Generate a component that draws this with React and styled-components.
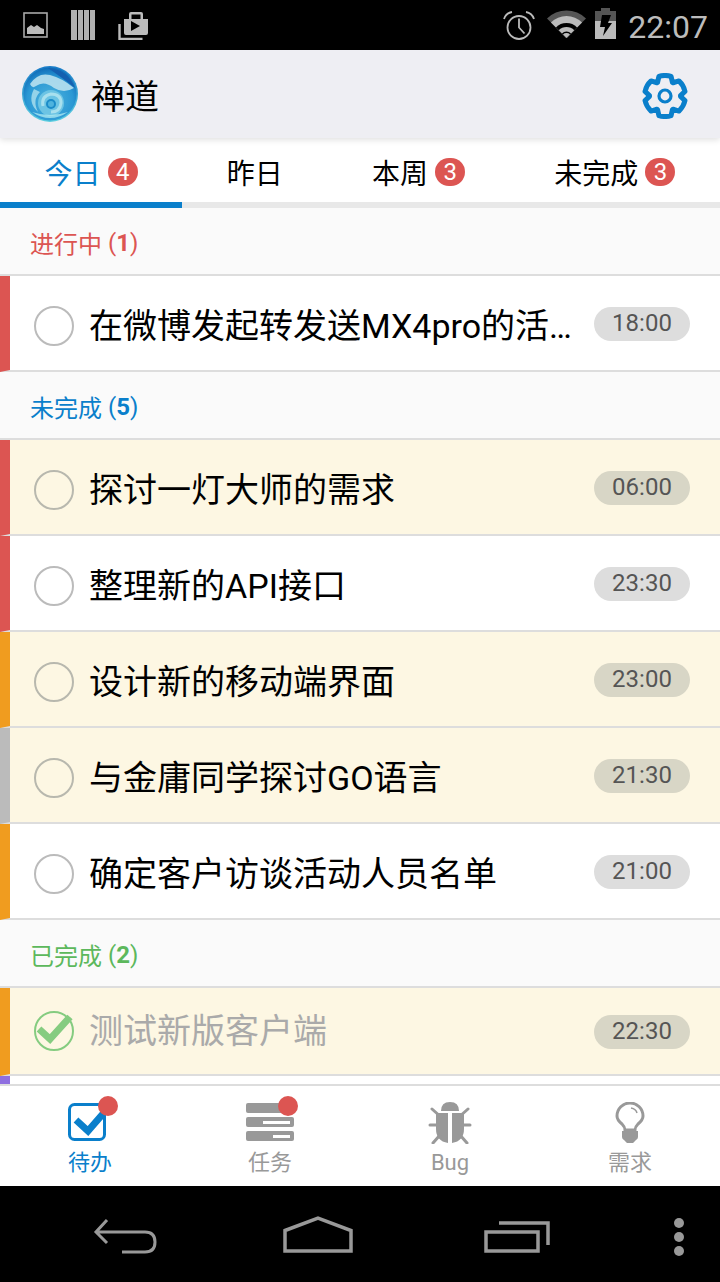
import styled, { createGlobalStyle } from 'styled-components';

const BLUE = '#0a7fcb';
const RED = '#dc5552';
const ORANGE = '#f09c1f';
const GREY = '#bbbbbb';
const PURPLE = '#8f6fe0';
const GREEN = '#5cb85c';

const GlobalStyle = createGlobalStyle`
  html, body { margin: 0; padding: 0; background: #000; }
  body { font-family: Roboto, "Noto Sans CJK SC", sans-serif; }
  * { box-sizing: border-box; }
`;

const Phone = styled.div`
  width: 720px;
  height: 1282px;
  display: flex;
  flex-direction: column;
  overflow: hidden;
  background: #fff;
`;

/* status bar */
const StatusBar = styled.div`
  height: 50px;
  flex: none;
  background: #000;
  display: flex;
  align-items: center;
  justify-content: space-between;
  padding: 0 12px 0 23px;
`;
const StatusGroup = styled.div`
  display: flex;
  align-items: center;
  gap: ${(p) => p.$gap}px;
`;
const Clock = styled.span`
  font-size: 32px;
  line-height: 50px;
  padding-top: 3px;
  color: #bcbcbc;
  margin-left: 3px;
`;

/* header */
const Header = styled.header`
  height: 88px;
  flex: none;
  background: #eeeef3;
  display: flex;
  align-items: center;
  padding: 0 32px 0 22px;
  box-shadow: 0 2px 6px rgba(0, 0, 0, 0.12);
  position: relative;
  z-index: 1;
`;
const AppName = styled.h1`
  flex: 1;
  margin: 0 0 0 13px;
  padding-top: 6px;
  font-size: 34px;
  line-height: 44px;
  font-weight: 400;
  color: #000;
`;
const GearWrap = styled.svg`
  width: 46px;
  height: 46px;
  flex: none;
  margin-top: 4px;
`;

/* tabs */
const Tabs = styled.nav`
  height: 70px;
  flex: none;
  display: flex;
  background: #fff;
  border-bottom: 6px solid #e8e8e8;
`;
const Tab = styled.div`
  flex: 1 1 auto;
  height: 70px;
  display: flex;
  align-items: center;
  justify-content: center;
  gap: 7px;
  padding-top: 4px;
  font-size: 28px;
  color: ${(p) => (p.$active ? BLUE : '#000')};
  border-bottom: 6px solid ${(p) => (p.$active ? BLUE : 'transparent')};
`;
const Count = styled.span`
  width: 30px;
  height: 28px;
  border-radius: 14px;
  background: ${RED};
  color: #fff;
  font-size: 24px;
  line-height: 28px;
  text-align: center;
`;

/* list */
const List = styled.main`
  flex: 1;
  min-height: 0;
  overflow: hidden;
  background: #fafafa;
`;
const SectionTitle = styled.div`
  height: 68px;
  padding: 3px 0 0 30px;
  display: flex;
  align-items: center;
  gap: 6px;
  font-size: 24px;
  color: ${(p) => p.$color};
  border-bottom: 2px solid #dddddd;
`;
const SectionCount = styled.b`
  font-weight: 700;
`;
const Row = styled.div`
  height: ${(p) => (p.$done ? 88 : 96)}px;
  display: flex;
  align-items: center;
  padding: 0 30px 0 24px;
  background: ${(p) => (p.$warm ? '#fdf7e3' : '#fff')};
  border-left: 10px solid ${(p) => p.$stripe};
  border-bottom: 2px solid #dddddd;
`;
const Circle = styled.span`
  width: 40px;
  height: 40px;
  flex: none;
  margin-top: 6px;
  border-radius: 50%;
  border: 2px solid ${(p) => (p.$warm ? '#b8b8ae' : GREY)};
`;
const DoneMark = styled.svg`
  width: 40px;
  height: 40px;
  flex: none;
`;
const RowTitle = styled.div`
  flex: 1;
  min-width: 0;
  margin: ${(p) => (p.$done ? 0 : 6)}px 17px 0 15px;
  font-size: 34px;
  line-height: 44px;
  color: ${(p) => (p.$done ? '#aaaaaa' : '#000')};
  white-space: nowrap;
  overflow: hidden;
  text-overflow: ellipsis;
`;
const Time = styled.span`
  width: 96px;
  height: 34px;
  flex: none;
  margin-top: 2px;
  border-radius: 17px;
  background: ${(p) => (p.$warm ? '#d8d6c6' : '#dddddd')};
  color: #555;
  font-size: 24px;
  line-height: 32px;
  text-align: center;
`;

/* bottom tab bar */
const BottomBar = styled.nav`
  height: 102px;
  flex: none;
  display: grid;
  grid-template-columns: repeat(4, 1fr);
  background: #fff;
  border-top: 2px solid #dddddd;
`;
const BottomItem = styled.div`
  display: flex;
  flex-direction: column;
  align-items: center;
  padding-top: 16px;
  color: ${(p) => (p.$active ? BLUE : '#999999')};
  font-size: 22px;
`;
const BottomIcon = styled.div`
  position: relative;
  width: 48px;
  height: 42px;
  display: flex;
  align-items: flex-start;
  justify-content: center;
`;
const Dot = styled.span`
  position: absolute;
  top: -6px;
  right: -4px;
  width: 20px;
  height: 20px;
  border-radius: 50%;
  background: ${RED};
`;
const BottomLabel = styled.span`
  line-height: 30px;
  margin-top: 4px;
`;

/* android nav */
const NavBar = styled.div`
  height: 96px;
  flex: none;
  background: #000;
  display: flex;
  align-items: flex-start;
  padding: 31px 0 0 93px;
`;
const NavIcon = styled.svg`
  flex: none;
  margin-left: ${(p) => p.$left || 0}px;
  margin-top: ${(p) => p.$top || 0}px;
`;

const gearPath = (() => {
  const pts = [];
  for (let i = 0; i < 6; i++) {
    const a = ((i * 60 - 90) * Math.PI) / 180;
    const w = 0.3;
    const xy = (r, t) => `${(23 + r * Math.cos(t)).toFixed(2)} ${(23 + r * Math.sin(t)).toFixed(2)}`;
    pts.push(`${i ? 'L' : 'M'}${xy(15.5, a - 0.5)}`);
    pts.push(`L${xy(20.5, a - w)}`);
    pts.push(`Q${xy(21.5, a)} ${xy(20.5, a + w)}`);
    pts.push(`L${xy(15.5, a + 0.5)}`);
  }
  return pts.join(' ') + ' Z';
})();

// one wedge of the wifi fan, radius r around the tip
const fan = (r) => {
  const d = r * 0.707;
  return `M19.5 29L${19.5 - d} ${29 - d}A${r} ${r} 0 0 1 ${19.5 + d} ${29 - d}Z`;
};

const PictureIcon = () => (
  <svg width="25" height="26" viewBox="0 0 25 26">
    <rect x="1" y="1" width="23" height="24" fill="none" stroke="#a8a8a8" strokeWidth="1.6" />
    <path d="M4 22v-6l4-3 3 2 3-2 4 3 3 1v5z" fill="#bbb" />
  </svg>
);
const BooksIcon = () => (
  <svg width="24" height="30" viewBox="0 0 24 30">
    <path d="M0 0h6v30H0zM7 0h5v30H7zM13 0h5v30h-5zM19 0h5v30h-5z" fill="#b0b0b0" />
  </svg>
);
const BriefcaseIcon = () => (
  <svg width="30" height="30" viewBox="0 -1 30 30">
    <path d="M1.500 13v15h23" fill="none" stroke="#bbb" strokeWidth="2.400" />
    <path d="M6 8h5V3q0-2 2-2h10q2 0 2 2v5h5v14q0 2-2 2H8q-2 0-2-2zM13.500 8h9V3.500h-9z" fill="#bbb" fillRule="evenodd" />
    <path d="M13 10v10l9-5z" fill="#000" />
  </svg>
);
const AlarmIcon = () => (
  <svg width="35" height="30" viewBox="0 0 35 30">
    <circle cx="16" cy="17.500" r="11.500" fill="none" stroke="#bbb" strokeWidth="1.800" />
    <path d="M16 8.500v9l5.500 6" fill="none" stroke="#bbb" strokeWidth="1.800" />
    <path d="M1 9q2-6 8-7M31 9q-2-6-8-7" fill="none" stroke="#bbb" strokeWidth="1.800" />
  </svg>
);
const WifiIcon = () => (
  <svg width="39" height="32" viewBox="0 0 39 32">
    <path d={fan(27.6)} fill="#555" />
    <path d={fan(22)} fill="#bbb" />
    <path d={fan(15)} fill="#000" />
    <path d={fan(11)} fill="#bbb" />
    <path d={fan(6.5)} fill="#000" />
    <path d={fan(5)} fill="#bbb" />
  </svg>
);
const BatteryIcon = () => (
  <svg width="21" height="34" viewBox="0 0 21 34">
    <path d="M6 0h9v3h6v28H0V3h6z" fill="#555" />
    <path d="M0 13h21v18H0z" fill="#bbb" />
    <path d="M7 7h9l-3 8h4L8 28l2-9H5z" fill="#000" />
  </svg>
);

const GearIcon = () => (
  <GearWrap viewBox="0 0 46 46">
    <path d={gearPath} fill="none" stroke={BLUE} strokeWidth="5" strokeLinejoin="round" />
    <circle cx="23" cy="23" r="6" fill="none" stroke={BLUE} strokeWidth="3.200" />
  </GearWrap>
);

const Logo = () => (
  <svg width="56" height="56" viewBox="0 0 56 56">
    <defs>
      <radialGradient id="orb" cx="0.5" cy="0.62" r="0.62">
        <stop offset="0" stopColor="#4fb4de" />
        <stop offset="0.7" stopColor="#2a98d4" />
        <stop offset="1" stopColor="#0f6cb8" />
      </radialGradient>
      <linearGradient id="orbEdge" x1="0" y1="0" x2="0" y2="1">
        <stop offset="0" stopColor="#1a7cc8" />
        <stop offset="1" stopColor="#5ccfe0" />
      </linearGradient>
    </defs>
    <circle cx="28" cy="28" r="28" fill="url(#orbEdge)" />
    <circle cx="28" cy="28" r="26.500" fill="url(#orb)" />
    <path d="M26 2Q46 3 53 22Q42 13 26 2z" fill="#1560b0" />
    <path d="M8 18Q16 6 28 9Q40 12 52 22Q42 28 32 22Q22 14 14 20Q10 23 8 18z" fill="#b8e0ee" opacity="0.9" />
    <path d="M12 23Q5 36 16 46Q10 34 18 26z" fill="#a6dcec" opacity="0.85" />
    <circle cx="29" cy="37" r="13" fill="#6cc4e4" />
    <path d="M21 40Q19 30 29 28Q39 28 39 37Q38 46 29 46" fill="none" stroke="#a8e0ee" strokeWidth="3" />
    <circle cx="29" cy="38" r="4" fill="#4fb4de" stroke="#1b8cc8" strokeWidth="2" />
    <path d="M10 46Q28 58 46 46Q28 52 10 46z" fill="#b8f0f4" opacity="0.7" />
  </svg>
);

const TodoIcon = () => (
  <svg width="44" height="40" viewBox="0 0 44 40">
    <rect x="1.500" y="2.500" width="35" height="35" rx="5" fill="none" stroke={BLUE} strokeWidth="3" />
    <path d="M8 18l12 11L40 6" fill="none" stroke={BLUE} strokeWidth="7" />
  </svg>
);
const TaskIcon = () => (
  <svg width="48" height="40" viewBox="0 -1 48 40">
    <rect y="0" width="48" height="10" rx="2" fill="#999" />
    <rect y="14" width="48" height="10" rx="2" fill="#999" />
    <rect y="28" width="48" height="10" rx="2" fill="#999" />
    <rect x="17" y="18" width="27" height="3" fill="#fff" />
    <rect x="27" y="32" width="17" height="3" fill="#fff" />
  </svg>
);
const BugIcon = () => (
  <svg width="44" height="42" viewBox="0 0 44 42">
    <path d="M13 9q0-9 9-9t9 9z" fill="#999" />
    <path d="M8 11h12v30q-12-2-12-14zM24 11h12v16q0 12-12 14z" fill="#999" />
    <path d="M4 7l9 8M40 7l-9 8M2 23h8M42 23h-8M5 41l7-8M39 41l-7-8" stroke="#999" strokeWidth="3" fill="none" strokeLinecap="round" />
  </svg>
);
const BulbIcon = () => (
  <svg width="30" height="42" viewBox="0 0 30 42">
    <path d="M10 28Q10 25 7 22Q2 18 2 14A13 13 0 0 1 28 14Q28 18 23 22Q20 25 20 28Z" fill="none" stroke="#999" strokeWidth="3" />
    <path d="M7 29h16v6q0 2-2 3l-3 3h-6l-3-3q-2-1-2-3z" fill="#999" />
    <path d="M16 6q5 1 6 5" fill="none" stroke="#999" strokeWidth="1.500" />
  </svg>
);

const sections = [
  {
    title: '进行中',
    count: 1,
    color: RED,
    rows: [{ title: '在微博发起转发送MX4pro的活动', time: '18:00', stripe: RED }],
  },
  {
    title: '未完成',
    count: 5,
    color: BLUE,
    rows: [
      { title: '探讨一灯大师的需求', time: '06:00', stripe: RED, warm: true },
      { title: '整理新的API接口', time: '23:30', stripe: RED },
      { title: '设计新的移动端界面', time: '23:00', stripe: ORANGE, warm: true },
      { title: '与金庸同学探讨GO语言', time: '21:30', stripe: GREY, warm: true },
      { title: '确定客户访谈活动人员名单', time: '21:00', stripe: ORANGE },
    ],
  },
  {
    title: '已完成',
    count: 2,
    color: GREEN,
    rows: [
      { title: '测试新版客户端', time: '22:30', stripe: ORANGE, warm: true, done: true },
      { stripe: PURPLE, done: true },
    ],
  },
];

const tabs = [
  { label: '今日', count: 4, active: true },
  { label: '昨日' },
  { label: '本周', count: 3 },
  { label: '未完成', count: 3 },
];

function App() {
  return (
    <Phone>
      <GlobalStyle />
      <StatusBar>
        <StatusGroup $gap={23}>
          <PictureIcon />
          <BooksIcon />
          <BriefcaseIcon />
        </StatusGroup>
        <StatusGroup $gap={9}>
          <AlarmIcon />
          <WifiIcon />
          <BatteryIcon />
          <Clock>22:07</Clock>
        </StatusGroup>
      </StatusBar>

      <Header>
        <Logo />
        <AppName>禅道</AppName>
        <GearIcon />
      </Header>

      <Tabs>
        {tabs.map((t) => (
          <Tab key={t.label} $active={t.active}>
            {t.label}
            {t.count && <Count>{t.count}</Count>}
          </Tab>
        ))}
      </Tabs>

      <List>
        {sections.map((s) => (
          <section key={s.title}>
            <SectionTitle $color={s.color}>
              {s.title}
              <span>
                (<SectionCount>{s.count}</SectionCount>)
              </span>
            </SectionTitle>
            {s.rows.map((r, i) => (
              <Row key={i} $stripe={r.stripe} $warm={r.warm} $done={r.done}>
                {r.title && r.done && (
                  <DoneMark viewBox="0 0 40 40">
                    <circle cx="20" cy="20" r="19" fill="none" stroke="#85cc80" strokeWidth="2" />
                    <path d="M5 18l11 10L36 6" fill="none" stroke="#85cc80" strokeWidth="7" />
                  </DoneMark>
                )}
                {r.title && !r.done && <Circle $warm={r.warm} />}
                {r.title && <RowTitle $done={r.done}>{r.title}</RowTitle>}
                {r.time && <Time $warm={r.warm}>{r.time}</Time>}
              </Row>
            ))}
          </section>
        ))}
      </List>

      <BottomBar>
        <BottomItem $active>
          <BottomIcon>
            <TodoIcon />
            <Dot />
          </BottomIcon>
          <BottomLabel>待办</BottomLabel>
        </BottomItem>
        <BottomItem>
          <BottomIcon>
            <TaskIcon />
            <Dot />
          </BottomIcon>
          <BottomLabel>任务</BottomLabel>
        </BottomItem>
        <BottomItem>
          <BottomIcon>
            <BugIcon />
          </BottomIcon>
          <BottomLabel>Bug</BottomLabel>
        </BottomItem>
        <BottomItem>
          <BottomIcon>
            <BulbIcon />
          </BottomIcon>
          <BottomLabel>需求</BottomLabel>
        </BottomItem>
      </BottomBar>

      <NavBar>
        <NavIcon $top={2} width="66" height="36" viewBox="0 0 66 36">
          <path d="M14 1L3 13l11 11M3 13h49q10 0 10 10t-10 10H29" fill="none" stroke="#999" strokeWidth="3" />
        </NavIcon>
        <NavIcon $left={124} $top={-1} width="70" height="38" viewBox="0 0 70 38">
          <path d="M2 14.500L35 2l33 12.500V35H2z" fill="none" stroke="#999" strokeWidth="3.500" />
        </NavIcon>
        <NavIcon $left={131} $top={2} width="68" height="36" viewBox="0 0 68 36">
          <path d="M2 13h52v19H2z" fill="none" stroke="#999" strokeWidth="3.500" />
          <path d="M15 4h49v22" fill="none" stroke="#999" strokeWidth="3.500" />
        </NavIcon>
        <NavIcon $left={122} width="10" height="40" viewBox="0 0 10 40">
          <circle cx="5" cy="6" r="5" fill="#999" />
          <circle cx="5" cy="20" r="5" fill="#999" />
          <circle cx="5" cy="34" r="5" fill="#999" />
        </NavIcon>
      </NavBar>
    </Phone>
  );
}

export default App;
